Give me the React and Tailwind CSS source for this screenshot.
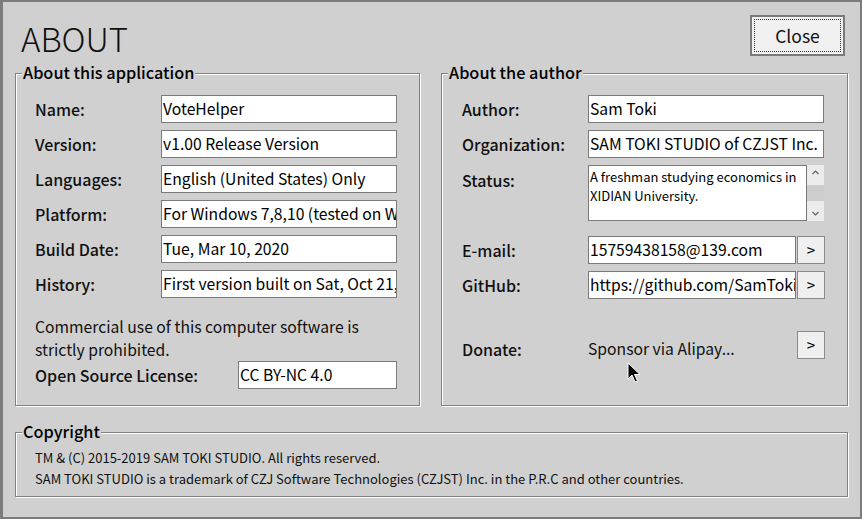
import React from 'react';

const font = "font-['Noto_Sans_CJK_SC','Noto_Sans',sans-serif]";

// etched group box, label sits over the top line
const GroupBox = ({ title, className, children }) => (
  <div className={`relative border border-[#808080] shadow-[inset_1px_1px_0_#fff,1px_1px_0_#fff] ${className}`}>
    <span className="absolute left-[6px] top-[-13px] bg-[#d0d0d0] pl-[1px] pr-[1px] text-[16.3px] leading-[22px] font-medium text-black">
      {title}
    </span>
    {children}
  </div>
);

const Label = ({ children, className = '' }) => (
  <span className={`w-[126px] shrink-0 text-[16px] leading-[24px] font-medium text-[#111] ${className}`}>{children}</span>
);

const TextBox = ({ value, w = 'w-[236px]' }) => (
  <div className={`${w} h-[28px] border border-[#7a7a7a] bg-white pl-[1px] overflow-hidden whitespace-nowrap text-[15.7px] leading-[26px] text-black`}>
    {value}
  </div>
);

const GoButton = () => (
  <button className="ml-[1px] w-[28px] h-[28px] shrink-0 border border-[#8a8a8a] bg-[#efefef] text-[15px] leading-[24px] text-black">
    &gt;
  </button>
);

const Row = ({ label, children, className = '' }) => (
  <div className={`flex items-center ${className}`}>
    <Label>{label}</Label>
    {children}
  </div>
);

const App = () => {
  return (
    <div className={`relative w-[862px] h-[519px] overflow-hidden bg-[#d0d0d0] border-2 border-l-[3px] border-[#7c7c7c] ${font}`}>
      {/* header */}
      <div className="flex items-start justify-between h-[71px] pl-[18px] pr-[15px]">
        <h1 className="mt-[16px] text-[33px] leading-[40px] font-light text-[#111]">ABOUT</h1>
        <button className="mt-[13px] w-[95px] h-[41px] border-2 border-[#7a7a7a] bg-[#f0f0f0] p-[2px]">
          <div className="w-full h-full border border-dotted border-[#333] text-[17.5px] leading-[31px] text-[#111]">
            Close
          </div>
        </button>
      </div>

      <div className="px-[12px]">
        <div className="flex gap-[21px]">
          <GroupBox title="About this application" className="w-[405px] h-[333px] pt-[21px] pl-[19px]">
            <div className="flex flex-col gap-[7px]">
              <Row label="Name:"><TextBox value="VoteHelper" /></Row>
              <Row label="Version:"><TextBox value="v1.00 Release Version" /></Row>
              <Row label="Languages:"><TextBox value="English (United States) Only" /></Row>
              <Row label="Platform:"><TextBox value="For Windows 7,8,10 (tested on Windows 10)" /></Row>
              <Row label="Build Date:"><TextBox value="Tue, Mar 10, 2020" /></Row>
              <Row label="History:"><TextBox value="First version built on Sat, Oct 21, 2017" /></Row>
            </div>
            <p className="mt-[17px] w-[350px] text-[15.7px] leading-[23px] text-[#111]">
              Commercial use of this computer software is strictly prohibited.
            </p>
            <div className="flex items-center">
              <span className="w-[203px] shrink-0 text-[16px] leading-[24px] font-medium text-[#111]">Open Source License:</span>
              <TextBox value="CC BY-NC 4.0" w="w-[159px]" />
            </div>
          </GroupBox>

          <GroupBox title="About the author" className="w-[407px] h-[333px] pt-[21px] pl-[20px]">
            <div className="flex flex-col gap-[7px]">
              <Row label="Author:"><TextBox value="Sam Toki" /></Row>
              <Row label="Organization:"><TextBox value="SAM TOKI STUDIO of CZJST Inc." /></Row>
              <div className="flex items-start">
                <Label className="mt-[3px]">Status:</Label>
                <div className="flex">
                  <div className="w-[219px] h-[56px] border border-[#7a7a7a] bg-white pl-[1px] pt-[1px] text-[13px] leading-[19px] text-black">
                    A freshman studying economics in XIDIAN University.
                  </div>
                  <div className="w-[17px] h-[56px] bg-[#ececec] flex flex-col items-center justify-between py-[2px]">
                    <svg width="9" height="9" viewBox="0 0 9 9" className="mt-[1px]">
                      <path d="M1.5 6 L4.5 3 L7.5 6" fill="none" stroke="#606060" strokeWidth="1.2" />
                    </svg>
                    <div className="w-full h-[16px] bg-[#cdcdcd]" />
                    <svg width="9" height="9" viewBox="0 0 9 9" className="mb-[1px]">
                      <path d="M1.5 3 L4.5 6 L7.5 3" fill="none" stroke="#606060" strokeWidth="1.2" />
                    </svg>
                  </div>
                </div>
              </div>
              <Row label="E-mail:" className="mt-[8px]">
                <TextBox value="15759438158@139.com" w="w-[208px]" />
                <GoButton />
              </Row>
              <Row label="GitHub:">
                <TextBox value="https://github.com/SamToki" w="w-[208px]" />
                <GoButton />
              </Row>
              <div className="flex items-start mt-[25px]">
                <Label className="mt-[6px]">Donate:</Label>
                <span className="w-[208px] mt-[6px] text-[15.7px] leading-[24px] text-[#111]">Sponsor via Alipay...</span>
                <GoButton />
              </div>
            </div>
          </GroupBox>
        </div>

        <GroupBox title="Copyright" className="mt-[26px] w-[833px] h-[65px] pt-[14px] pl-[19px]">
          <p className="text-[13px] leading-[21px] text-[#111]">TM &amp; (C) 2015-2019 SAM TOKI STUDIO. All rights reserved.</p>
          <p className="text-[13px] leading-[21px] text-[#111]">
            SAM TOKI STUDIO is a trademark of CZJ Software Technologies (CZJST) Inc. in the P.R.C and other countries.
          </p>
        </GroupBox>
      </div>

      {/* mouse pointer over the donate link */}
      <svg className="absolute left-[624px] top-[360px]" width="14" height="22" viewBox="0 0 14 22">
        <path d="M1 1 L1 17 L5 13 L8 20 L10.5 19 L7.5 12.5 L13 12.5 Z" fill="#000" stroke="#fff" strokeWidth="1" />
      </svg>
    </div>
  );
};

export default App;
